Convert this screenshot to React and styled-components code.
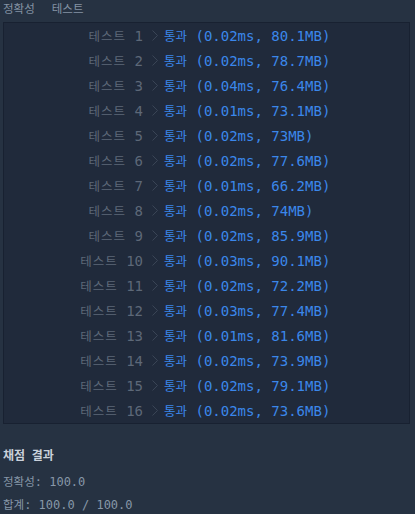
import React from 'react'
import styled, {createGlobalStyle} from 'styled-components'

const GlobalStyle = createGlobalStyle`
html, body {
  margin: 0;
  padding: 0;
  background: #263242;
}
`

const mono = `"DejaVu Sans Mono", "Noto Sans CJK KR", monospace`

const Page = styled.div`
width: 415px;
height: 514px;
background: #263242;
font-family: ${mono};
overflow: hidden;
`

const Tabs = styled.div`
display: flex;
gap: 17px;
height: 22px;
padding: 0 3px;
align-items: flex-start;
font-size: 11.5px;
line-height: 16px;
color: #8493a4;
font-family: "Noto Sans CJK KR", sans-serif;
`

const Console = styled.div`
margin: 0 3px;
width: 407px;
background: #202a3b;
border: 1px solid #182131;
box-sizing: border-box;
`

const Row = styled.div`
display: grid;
grid-template-columns: 139px 21px 1fr;
height: 25px;
align-items: center;
font-size: 14px;
`

const Label = styled.div`
justify-self: end;
color: #5d6878;
white-space: pre;
`

const Ko = styled.span`
font-family: "Noto Sans CJK KR", sans-serif;
font-size: ${props => props.size || 12.5}px;
letter-spacing: ${props => props.spacing || 0}px;
`

const Chevron = styled.svg`
justify-self: center;
margin-left: 2px;
`

const Result = styled.div`
color: #3b87ea;
white-space: pre;
`

const Summary = styled.div`
padding: 23px 3px 0;
display: flex;
flex-direction: column;
gap: 6px;
font-size: 12px;
line-height: 16px;
`

const Title = styled.div`
color: #c9d1db;
font-weight: bold;
font-family: "Noto Sans CJK KR", sans-serif;
word-spacing: 4px;
margin-bottom: 4px;
`

const Line = styled.div`
color: #8797a8;
white-space: pre;
`

const tests = [
  ['0.02ms', '80.1MB'],
  ['0.02ms', '78.7MB'],
  ['0.04ms', '76.4MB'],
  ['0.01ms', '73.1MB'],
  ['0.02ms', '73MB'],
  ['0.02ms', '77.6MB'],
  ['0.01ms', '66.2MB'],
  ['0.02ms', '74MB'],
  ['0.02ms', '85.9MB'],
  ['0.03ms', '90.1MB'],
  ['0.02ms', '72.2MB'],
  ['0.03ms', '77.4MB'],
  ['0.01ms', '81.6MB'],
  ['0.02ms', '73.9MB'],
  ['0.02ms', '79.1MB'],
  ['0.02ms', '73.6MB'],
]

function TestRow({n, time, mem}) {
  return (
    <Row>
      <Label><Ko spacing={1}>테스트</Ko> {n}</Label>
      <Chevron width="6" height="11" viewBox="0 0 6 11">
        <path d="M0.5 0.5 L5.5 5.5 L0.5 10.5" fill="none" stroke="#3a4556" strokeWidth="1" />
      </Chevron>
      <Result><Ko>통과</Ko> ({time}, {mem})</Result>
    </Row>
  )
}

export default function App() {
  return (
    <Page>
      <GlobalStyle />
      <Tabs>
        <span>정확성</span>
        <span>테스트</span>
      </Tabs>
      <Console>
        {tests.map(([time, mem], i) => (
          <TestRow key={i} n={i + 1} time={time} mem={mem} />
        ))}
      </Console>
      <Summary>
        <Title>채점 결과</Title>
        <Line><Ko size={11.5}>정확성</Ko>: 100.0</Line>
        <Line><Ko size={11.5}>합계</Ko>: 100.0 / 100.0</Line>
      </Summary>
    </Page>
  )
}
